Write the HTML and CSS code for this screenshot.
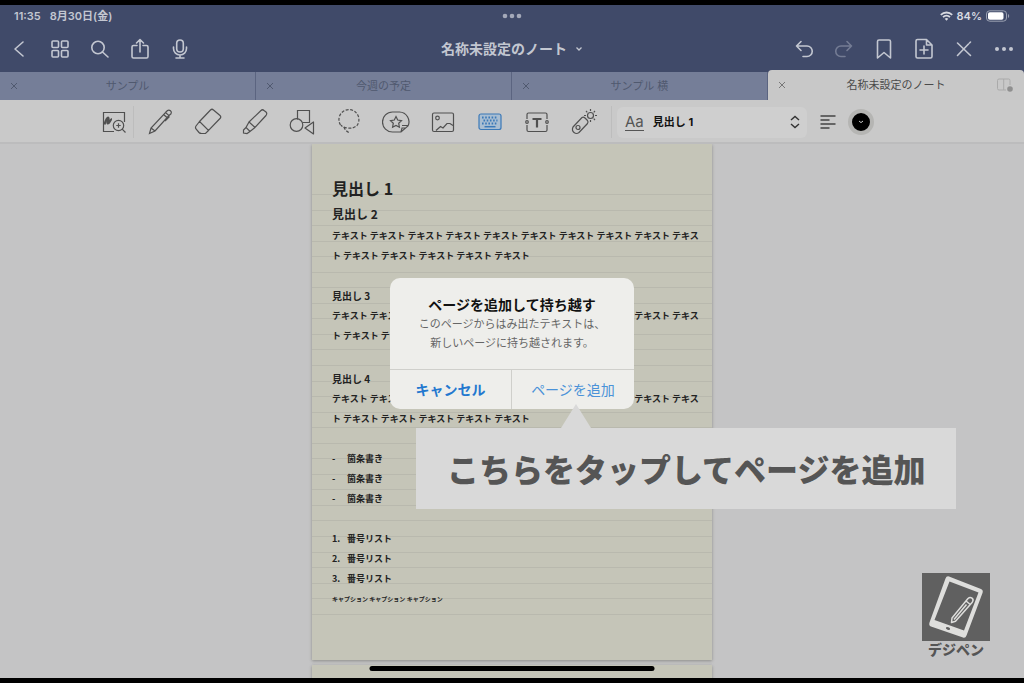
FILE: index.html
```html
<!DOCTYPE html>
<html lang="ja">
<head>
<meta charset="utf-8">
<meta name="viewport" content="width=device-width, initial-scale=1">
<title>名称未設定のノート</title>
<link rel="stylesheet" href="styles.css">
</head>
<body>
<div class="screen">
  <header class="header">
    <div class="status">
      <div class="status-left"><span>11:35</span><span>8月30日(金)</span></div>
      <svg class="dots" width="20" height="6" viewBox="0 0 20 6"><circle cx="3" cy="3" r="2.3"/><circle cx="10" cy="3" r="2.3"/><circle cx="17" cy="3" r="2.3"/></svg>
      <div class="status-right">
        <svg width="13" height="10" viewBox="0 0 13 10" fill="none" stroke="currentColor" stroke-width="1.8"><path d="M.8 3.8a8.2 8.2 0 0 1 11.4 0M3 6.2a5 5 0 0 1 7 0"/><path d="M4.7 7.8a2.6 2.6 0 0 1 3.6 0L6.5 9.8z" fill="currentColor" stroke="none"/></svg>
        <span>84%</span>
        <svg width="24" height="12" viewBox="0 0 24 12"><rect x=".5" y=".8" width="20" height="10.4" rx="3.2" fill="none" stroke="#9ba1b2"/><rect x="2" y="2.3" width="15.5" height="7.4" rx="1.8" fill="#fff" stroke="none"/><path d="M22 4v4c1.6-.7 1.6-3.300 0-4z" fill="#9ba1b2" stroke="none"/></svg>
      </div>
    </div>
    <nav class="nav">
      <div class="nav-group">
        <button class="icon-btn" aria-label="戻る"><svg width="24" height="24" viewBox="0 0 24 24"><path d="M15 5l-8 7 8 7"/></svg></button>
        <button class="icon-btn" aria-label="一覧"><svg width="24" height="24" viewBox="0 0 24 24"><rect x="4" y="4" width="6.500" height="6.500" rx="1"/><rect x="13.500" y="4" width="6.500" height="6.500" rx="1"/><rect x="4" y="13.500" width="6.500" height="6.500" rx="1"/><rect x="13.500" y="13.500" width="6.500" height="6.500" rx="1"/></svg></button>
        <button class="icon-btn" aria-label="検索"><svg width="24" height="24" viewBox="0 0 24 24"><circle cx="10" cy="10.500" r="6.200"/><path d="M14.500 15l5.500 5"/></svg></button>
        <button class="icon-btn" aria-label="共有"><svg width="24" height="24" viewBox="0 0 24 24"><path d="M9 8.500H5.500Q4 8.500 4 10v9.500Q4 21 5.500 21h13q1.500 0 1.500-1.500V10q0-1.500-1.500-1.500H15M12 15V2.500M8.500 6L12 2.500 15.500 6"/></svg></button>
        <button class="icon-btn" aria-label="録音"><svg width="24" height="24" viewBox="0 0 24 24"><rect x="8.700" y="3" width="6.600" height="12" rx="3.300"/><path d="M5.500 10v1.500a6.500 6.500 0 0 0 13 0V10M12 18v3M8 21h8"/></svg></button>
      </div>
      <button class="title">名称未設定のノート<svg width="8" height="6" viewBox="0 0 8 6"><path d="M1.500 1.500L4 4l2.500-2.500"/></svg></button>
      <div class="nav-group nav-end">
        <button class="icon-btn" aria-label="元に戻す"><svg width="24" height="24" viewBox="0 0 24 24"><path d="M9 4.500L4.500 9 9 13.500M4.500 9H15a5 5 0 0 1 0 10.500h-4"/></svg></button>
        <button class="icon-btn dim" aria-label="やり直す"><svg width="24" height="24" viewBox="0 0 24 24"><path d="M15 4.500L19.500 9 15 13.500M19.500 9H9a5 5 0 0 0 0 10.500h4"/></svg></button>
        <button class="icon-btn" aria-label="ブックマーク"><svg width="24" height="24" viewBox="0 0 24 24"><path d="M5.500 21V4.500q0-1.500 1.500-1.500h10q1.500 0 1.500 1.500V21L12 15.500z"/></svg></button>
        <button class="icon-btn" aria-label="ページを挿入"><svg width="24" height="24" viewBox="0 0 24 24"><path d="M14.500 2.500H5.500Q4 2.500 4 4v15.500Q4 21 5.500 21h13q1.500 0 1.500-1.500V8zM14.500 2.500V8H20M12 9v8M8 13h8"/></svg></button>
        <button class="icon-btn" aria-label="ペンを切り替え"><svg width="24" height="24" viewBox="0 0 24 24"><path d="M5.500 18.500L16.500 7M5.500 6L18.500 18.500M17.500 6l1-1"/></svg></button>
        <button class="icon-btn" aria-label="その他"><svg width="24" height="24" viewBox="0 0 24 24"><g fill="currentColor" stroke="none"><circle cx="5" cy="12" r="2"/><circle cx="12" cy="12" r="2"/><circle cx="19" cy="12" r="2"/></g></svg></button>
      </div>
    </nav>
    <div class="tabs">
      <div class="tab"><button class="close" aria-label="閉じる"><svg width="8" height="8" viewBox="0 0 8 8"><path d="M1 1l6 6M7 1L1 7"/></svg></button><button class="tab-name">サンプル</button></div>
      <div class="tab"><button class="close" aria-label="閉じる"><svg width="8" height="8" viewBox="0 0 8 8"><path d="M1 1l6 6M7 1L1 7"/></svg></button><button class="tab-name">今週の予定</button></div>
      <div class="tab"><button class="close" aria-label="閉じる"><svg width="8" height="8" viewBox="0 0 8 8"><path d="M1 1l6 6M7 1L1 7"/></svg></button><button class="tab-name">サンプル 横</button></div>
      <div class="tab active"><button class="close" aria-label="閉じる"><svg width="8" height="8" viewBox="0 0 8 8"><path d="M1 1l6 6M7 1L1 7"/></svg></button><button class="tab-name">名称未設定のノート</button><button class="split" aria-label="分割表示"><svg width="18" height="16" viewBox="0 0 18 16"><path d="M10 13H3q-1.500 0-1.500-1.500v-8Q1.500 2 3 2h9.500Q14 2 14 3.500V8M7.700 2v11"/><circle cx="14" cy="12" r="2.800" fill="#8f8f8f" stroke="none"/></svg></button></div>
    </div>
  </header>

  <div class="toolbar">
    <button class="tool first" aria-label="ズーム"><svg width="28" height="28" viewBox="0 0 28 28"><path d="M24.500 14V4.500H3.500v19h10.500"/><path d="M4.500 16.500c1-4 3-8 4-6.500s-2 5-.7 5.500S10.500 11 12 11" stroke-width="2.200"/><circle cx="18.500" cy="17.500" r="5.200"/><path d="M22.200 21.200l3.300 3.300M18.500 15.300v4.400M16.300 17.500h4.400"/></svg></button>
    <button class="tool" aria-label="ペン"><svg width="28" height="28" viewBox="0 0 28 28"><path d="M2.500 25.500l1.500-5.500L18.500 4.500l3.500 3L8 23zM18.500 4.500l2-2q1.500-1 3 .3t.5 3L22 7.500M22.500 8.500L18 13M4 20l4 3"/><path d="M16.500 6.500l3.500 3"/></svg></button>
    <button class="tool" aria-label="消しゴム"><svg width="28" height="28" viewBox="0 0 28 28"><path d="M5.500 13.500L16.500 2q1.500-1.500 3 0l6.500 5.500q1.500 1.500 0 3L14.500 22.500zM5.500 13.500l-3.500 4.500q-1 1.500 0 3l3 3.500q1 1 2.500 1h4l3-3"/></svg></button>
    <button class="tool" aria-label="蛍光ペン"><svg width="28" height="28" viewBox="0 0 28 28"><path d="M8 14L20 2.500q1.500-1.500 3 0L25 4q1.500 1.500 0 3.500L14 19.500zM8 14l-3 5.500 4 4 5-4M5 19.500L2.500 22v3l3.500.5 3-2"/></svg></button>
    <button class="tool" aria-label="図形"><svg width="28" height="28" viewBox="0 0 28 28"><path d="M9.500 11.500V2.500h12v12h-7"/><circle cx="8.500" cy="17" r="6.300"/><path d="M25.500 14v12L17 20z" stroke-linejoin="round"/></svg></button>
    <button class="tool" aria-label="なげなわ"><svg width="28" height="28" viewBox="0 0 28 28"><path d="M5.500 17A10 10 0 1 1 22 17.500Q18 21 12 20q-5-1-6-3" stroke-dasharray="3 1.500"/><path d="M9 19q1 4 6 6" stroke-dasharray="3 1.500"/></svg></button>
    <button class="tool" aria-label="ステッカー"><svg width="28" height="28" viewBox="0 0 28 28"><path d="M19 24H10.500a9.800 9.800 0 0 1 0-20h7a9.800 9.800 0 0 1 8.500 14zM19 24l1-4h3M20 17.500h6"/><path d="M14 8.500l1.700 3.500 3.800.6-2.800 2.700.7 3.900-3.400-1.800-3.400 1.800.7-3.900-2.800-2.700 3.800-.6z"/></svg></button>
    <button class="tool" aria-label="画像"><svg width="28" height="28" viewBox="0 0 28 28"><rect x="3.500" y="5" width="21" height="18.500" rx="1.500"/><circle cx="8.500" cy="10" r="1.800"/><path d="M7 22.500l4.500-4 2.500 1.500 4-4.500h3l3 2"/></svg></button>
    <button class="tool selected" aria-label="キーボード"><svg width="28" height="28" viewBox="0 0 28 28"><rect x="3" y="6" width="22" height="15.500" rx="2" fill="#a9bed2"/><path d="M6 9.500h16M7.500 12.500h14M6 15.500h16" stroke-width="2" stroke-dasharray="1.600 1.600"/><path d="M8.500 18.700h11" stroke-width="1.500"/></svg></button>
    <button class="tool" aria-label="テキスト"><svg width="28" height="28" viewBox="0 0 28 28"><path d="M4 11V6.500Q4 5 5.500 5h17Q24 5 24 6.500V11M24 17v5q0 1.500-1.500 1.500h-17Q4 23.500 4 22v-5"/><circle cx="4" cy="14" r="1.300"/><circle cx="24" cy="14" r="1.300"/><path d="M9.500 11h9M14 11v8.500" stroke-width="2.200"/></svg></button>
    <button class="tool" aria-label="レーザーポインター"><svg width="28" height="28" viewBox="0 0 28 28"><path d="M3 19L12 9.500q1.500-1 3 .5l2.500 2.500q1 1.500 0 3L9 24.500q-2.500 2-5 0t-1-5.500z"/><circle cx="8" cy="19.500" r="2"/><circle cx="20.500" cy="7.500" r="3"/><path d="M20.500 3V1M20.500 14v-2M16 7.500h-2M27 7.500h-2M17.300 4.300L16 3M25 12l-1.300-1.300M23.700 4.300L25 3"/></svg></button>
    <span class="rule"></span>
    <div class="style-box">
      <label for="style">Aa</label>
      <select id="style"><option>見出し 1</option><option>見出し 2</option></select>
      <svg width="12" height="14" viewBox="0 0 12 14"><path d="M2 5l4-3.500L10 5M2 9l4 3.500L10 9"/></svg>
    </div>
    <button class="align" aria-label="文字揃え"><svg width="16" height="16" viewBox="0 0 16 16"><path d="M.5 2h15M.5 6h9M.5 10h15M.5 14h9"/></svg></button>
    <button class="color" aria-label="文字色"><svg width="8" height="6" viewBox="0 0 8 6"><path d="M2 2l2 1.600L6 2"/></svg></button>
  </div>

  <main class="canvas">
    <article class="paper">
      <div class="lines"><i></i><i></i><i></i><i></i><i></i><i></i><i></i><i></i><i></i><i></i><i></i><i></i><i></i><i></i><i></i><i></i><i></i><i></i><i></i><i></i><i></i><i></i><i></i><i></i><i></i><i></i><i></i><i></i></div>
      <h1>見出し 1</h1>
      <h2>見出し 2</h2>
      <p>テキスト テキスト テキスト テキスト テキスト テキスト テキスト テキスト テキスト テキス<br>ト テキスト テキスト テキスト テキスト テキスト</p>
      <h3>見出し 3</h3>
      <p>テキスト テキスト テキスト テキスト テキスト テキスト テキスト テキスト テキスト テキス<br>ト テキスト テキスト テキスト テキスト テキスト</p>
      <h4>見出し 4</h4>
      <p>テキスト テキスト テキスト テキスト テキスト テキスト テキスト テキスト テキスト テキス<br>ト テキスト テキスト テキスト テキスト テキスト</p>
      <ul>
        <li><span>-</span>箇条書き</li>
        <li><span>-</span>箇条書き</li>
        <li><span>-</span>箇条書き</li>
      </ul>
      <ol>
        <li><span>1.</span>番号リスト</li>
        <li><span>2.</span>番号リスト</li>
        <li><span>3.</span>番号リスト</li>
      </ol>
      <p class="caption">キャプション キャプション キャプション</p>
    </article>
    <div class="paper next"></div>
  </main>

  <div class="home-bar"></div>

  <div class="alert" role="alertdialog" aria-labelledby="alert-title">
    <div class="alert-body">
      <strong id="alert-title">ページを追加して持ち越す</strong>
      <p>このページからはみ出たテキストは、<br>新しいページに持ち越されます。</p>
    </div>
    <div class="alert-actions">
      <button class="cancel">キャンセル</button>
      <button>ページを追加</button>
    </div>
  </div>

  <div class="callout">こちらをタップしてページを追加</div>

  <div class="brand">
    <svg viewBox="0 0 68 68"><rect width="68" height="68" fill="#606060" stroke="none"/><path fill="#dededc" stroke="none" fill-rule="evenodd" d="M27 3.500Q24.500 2.800 23.500 5.500L7.500 49.500Q6.500 52.500 9 53.500L41 64.500Q43.500 65.300 44.500 62.500L60.500 20Q61.500 17 59 16zM27.500 8.500L56.500 19.500 42 57.500 12.500 47z"/><ellipse cx="26" cy="55.500" rx="2.200" ry="1.200" fill="#606060" stroke="none" transform="rotate(20 26 55.500)"/><path d="M29.500 49.500L30 45 46 25.500q2-1.800 4-.3t.3 4L33.500 48.300zM44 28l4.300 3.500M32 46.500L44.500 31.500" fill="none" stroke="#dededc" stroke-width="1.500" stroke-linejoin="round"/></svg>
    <span>デジペン</span>
  </div>
</div>
</body>
</html>
```
FILE: styles.css
```css
* { box-sizing: border-box; }
body {
  margin: 0;
  background: #000;
  color: #111;
  font-family: "Inter", "Noto Sans CJK JP", sans-serif;
}
button, select { font: inherit; color: inherit; background: none; border: 0; padding: 0; margin: 0; }
h1, h2, h3, h4, p, ul, ol { margin: 0; padding: 0; }
svg { display: block; fill: none; stroke: currentColor; }

.screen {
  position: relative;
  display: flex;
  flex-direction: column;
  height: 100vh;
  border: solid #000;
  border-width: 5px 0;
  background: #c4c4c5;
  overflow: hidden;
}

.header { background: #404a69; color: #c3c7d1; }
.status {
  display: grid;
  grid-template-columns: 1fr auto 1fr;
  align-items: center;
  height: 22px;
  padding: 0 14px;
  font-size: 11px;
  font-weight: 600;
  line-height: 16px;
}
.status-left { display: flex; align-items: baseline; gap: 9px; }
.status-right { display: flex; gap: 4px; align-items: center; justify-content: flex-end; color: #d8dae1; }
.dots { fill: #a4a9b9; stroke: none; }

.nav {
  display: grid;
  grid-template-columns: 1fr auto 1fr;
  align-items: center;
  height: 43px;
}
.nav-group { display: flex; }
.nav-end { justify-content: flex-end; }
.icon-btn { display: grid; place-items: center; width: 40px; height: 40px; }
.icon-btn svg { stroke-width: 1.6; stroke-linecap: round; stroke-linejoin: round; }
.dim { color: #747c94; }
.title { display: flex; align-items: center; gap: 8px; font-size: 14px; font-weight: 600; line-height: 20px; }
.title svg { stroke-width: 1.3; }

.tabs { display: grid; grid-template-columns: repeat(4, 1fr); align-items: end; height: 30px; }
.tab {
  display: grid;
  grid-template-columns: 28px 1fr 28px;
  align-items: center;
  height: 28px;
  background: #757e98;
  border-right: 1px solid #5b6480;
  color: #50596f;
  font-size: 11px;
}
.close { display: grid; place-items: center; height: 28px; }
.tab-name { line-height: 20px; }
.tab.active { height: 30px; background: #c8c8c8; border: 0; border-radius: 4px 4px 0 0; color: #4a4a4a; }
.active .close { color: #777; }
.split { color: #aaa; }

.toolbar {
  display: flex;
  align-items: center;
  height: 44px;
  padding: 2px 0 0 90px;
  background: #c9c9c9;
  border-bottom: 2px solid #bcbcbd;
}
.tool { display: grid; place-items: center; flex: none; width: 47px; height: 40px; color: #505050; }
.tool svg { stroke-width: 1.2; }
.first { background: linear-gradient(#bdbdbd, #bdbdbd) 43px center / 1px 32px no-repeat; }
.selected { color: #3b79b8; }
.rule { width: 1px; height: 32px; margin: 0 5px 0 4px; background: #bdbdbd; }
.style-box {
  display: flex;
  align-items: center;
  gap: 9px;
  width: 190px;
  height: 31px;
  padding: 0 6px 0 8px;
  border-radius: 6px;
  background: #cfcfcf;
}
.style-box label { color: #555; font-size: 15px; line-height: 16px; border-bottom: 1px solid #555; }
.style-box select { flex: 1; appearance: none; font-size: 11px; font-weight: 700; line-height: 16px; }
.style-box svg { stroke-width: 1.4; color: #333; }
.align { margin-left: 13px; color: #444; }
.align svg { stroke-width: 1.3; }
.color {
  display: grid;
  place-items: center;
  width: 26px;
  height: 26px;
  margin-left: 12px;
  border: 4px solid #b5b5b3;
  border-radius: 50%;
  background: #000;
  color: #ccc;
}

.canvas {
  flex: 1;
  min-height: 0;
  display: flex;
  flex-direction: column;
  align-items: center;
  gap: 5px;
  overflow: hidden;
}
.paper {
  position: relative;
  flex: none;
  width: 400px;
  height: 516px;
  padding: 31px 0 0 20px;
  background: #c5c5b8;
  box-shadow: 0 1px 3px #8c8c88;
  color: #222;
  font-family: "Noto Sans CJK JP", sans-serif;
  font-size: 9px;
  font-weight: 700;
  line-height: 20px;
  white-space: nowrap;
}
.paper > * { position: relative; }
.paper > .lines {
  position: absolute;
  inset: 50px 0 45px;
  display: flex;
  flex-direction: column;
  justify-content: space-between;
}
.lines i { height: 1px; background: #b9b9ae; }
.paper h1 { font-size: 16px; line-height: 26px; }
.paper h2 { padding: 3px 0 2px; font-size: 12px; line-height: 20px; }
.paper h3 { margin-top: 20px; font-size: 10px; }
.paper h4 { margin-top: 23px; font-size: 10px; }
.paper ul, .paper ol { margin-top: 20px; list-style: none; }
.paper li { display: grid; grid-template-columns: 15px 1fr; }
.paper .caption { font-size: 6px; }
.paper.next { height: 60px; }

.home-bar {
  position: absolute;
  left: 50%;
  bottom: 7px;
  width: 285px;
  height: 5px;
  transform: translateX(-50%);
  border-radius: 3px;
  background: #000;
}

.alert {
  position: absolute;
  top: 273px;
  left: 50%;
  width: 244px;
  transform: translateX(-50%);
  border-radius: 10px;
  background: #eeeeeb;
  overflow: hidden;
  text-align: center;
}
.alert-body { padding: 17px 0 16px; border-bottom: 1px solid #cfcfcb; }
.alert strong { display: block; font-size: 14px; line-height: 20px; }
.alert p { color: #666; font-size: 11px; line-height: 19px; }
.alert-actions { display: grid; grid-template-columns: 1fr 1fr; color: #4a92d8; font-size: 14px; line-height: 20px; }
.alert-actions button { height: 39px; }
.alert-actions .cancel { border-right: 1px solid #cfcfcb; color: #2378cf; font-weight: 700; }

.callout {
  position: absolute;
  top: 423px;
  left: 416px;
  padding: 18px 31px 19px;
  background: #d9d9d9;
  color: #555;
  font-family: "Noto Sans CJK JP", sans-serif;
  font-size: 32px;
  font-weight: 900;
  line-height: 44px;
  white-space: nowrap;
}
.callout::before {
  content: "";
  position: absolute;
  left: 145px;
  bottom: 100%;
  border: solid transparent;
  border-width: 0 15px 24px;
  border-bottom-color: #d9d9d9;
}

.brand {
  position: absolute;
  right: 34px;
  bottom: 20px;
  width: 68px;
  color: #555;
  font-size: 14px;
  font-weight: 900;
  line-height: 17px;
  text-align: center;
}
```
